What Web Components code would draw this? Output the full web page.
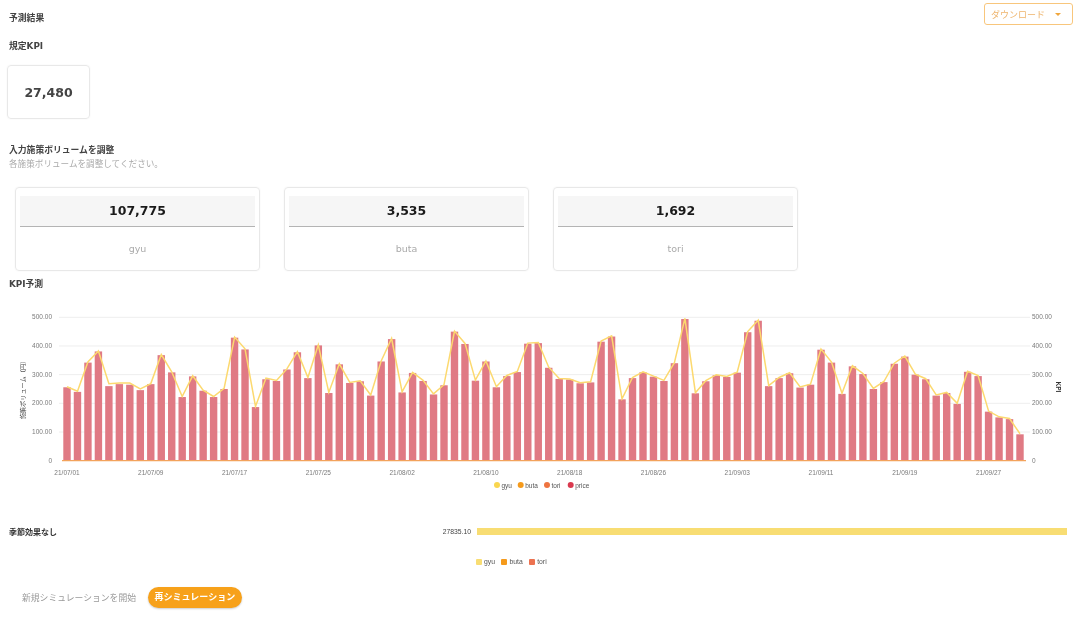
<!DOCTYPE html>
<html lang="ja">
<head>
<meta charset="utf-8">
<title>予測結果</title>
<style>
  html, body { margin: 0; background: #fff; }
  body {
    font-family: "DejaVu Sans", "Noto Sans CJK JP", sans-serif;
    color: #333;
    width: 1080px;
    height: 623px;
    overflow: hidden;
  }
</style>
</head>
<body>
<result-page>
  <section-title slot="title">予測結果</section-title>
  <download-button slot="action">ダウンロード</download-button>
</result-page>

<script>
// bar heights read off the reference, 21/07/01 .. 21/09/30
const VOLUMES = [
  256,240,342,381,260,267,265,246,267,368,308,222,294,244,222,250,429,388,187,284,
  278,318,378,288,402,236,336,271,277,227,346,424,238,306,278,231,263,450,407,279,
  346,256,295,309,408,410,324,285,283,270,273,415,433,214,288,308,293,278,340,494,
  235,277,298,292,307,448,488,260,288,305,255,265,387,342,233,329,302,250,274,338,
  363,300,284,227,236,198,310,295,171,151,145,92
];
// the line only departs from the bar tops in a few places
const LINE_OFFSET = { 4: 8, 5: 4, 6: 6, 7: 4, 18: 2, 19: 4 };

class SectionTitle extends HTMLElement {
  connectedCallback() {
    this.attachShadow({ mode: "open" }).innerHTML = `
      <style>
        :host { display: block; font-size: 8.8px; font-weight: 700; line-height: 13px; color: #444; }
      </style>
      <slot></slot>`;
  }
}

class DownloadButton extends HTMLElement {
  connectedCallback() {
    this.attachShadow({ mode: "open" }).innerHTML = `
      <style>
        :host {
          display: flex;
          align-items: center;
          justify-content: space-between;
          box-sizing: border-box;
          width: 89px;
          height: 22px;
          padding: 0 11px 0 6px;
          border: 1.5px solid #f8c67c;
          border-radius: 3px;
          color: #eeb46c;
          font-size: 9px;
        }
        i { width: 0; height: 0; border: 3px solid transparent; border-top: 3.5px solid #f0a63c; border-bottom: 0; }
      </style>
      <slot></slot><i></i>`;
  }
}

class KpiCard extends HTMLElement {
  connectedCallback() {
    this.attachShadow({ mode: "open" }).innerHTML = `
      <style>
        :host {
          display: flex;
          align-items: center;
          justify-content: center;
          box-sizing: border-box;
          width: 83px;
          height: 54px;
          border: 1px solid #e8e8e8;
          border-radius: 4px;
          box-shadow: 0 0 2px rgba(0,0,0,.05);
          font-size: 12.5px;
          font-weight: 700;
          color: #444;
        }
      </style>
      <slot></slot>`;
  }
}

class VolumeCard extends HTMLElement {
  connectedCallback() {
    this.attachShadow({ mode: "open" }).innerHTML = `
      <style>
        :host {
          display: block;
          box-sizing: border-box;
          width: 245px;
          height: 84px;
          padding: 8px 4px 0;
          border: 1px solid #e8e8e8;
          border-radius: 4px;
          box-shadow: 0 0 2px rgba(0,0,0,.05);
        }
        .value {
          height: 30px;
          line-height: 30px;
          background: #f6f6f6;
          border-bottom: 1.5px solid #b4b4b4;
          text-align: center;
          font-size: 12.5px;
          font-weight: 700;
          color: #1a1a1a;
        }
        .name { margin-top: 15px; text-align: center; font-size: 9.5px; line-height: 14px; color: #aaa; }
      </style>
      <div class="value"><slot></slot></div>
      <div class="name">${this.getAttribute("name")}</div>`;
  }
}

class ComboChart extends HTMLElement {
  connectedCallback() {
    const root = this.attachShadow({ mode: "open" });
    const base = 160.7, perUnit = 143.4 / 500, x0 = 67, step = 953 / 91;
    const y = (v) => base - v * perUnit;
    let grid = "", yLabels = "", bars = "", xLabels = "";

    for (let v = 0; v <= 500; v += 100) {
      const text = v ? v.toFixed(2) : "0";
      if (v) grid += `<line x1="59" x2="1030" y1="${y(v)}" y2="${y(v)}" stroke="#eee"/>`;
      yLabels += `<text x="52" y="${y(v) + 2}" text-anchor="end">${text}</text>`;
      yLabels += `<text x="1032" y="${y(v) + 2}">${text}</text>`;
    }
    VOLUMES.forEach((v, i) => {
      bars += `<rect x="${x0 + i * step - 3.7}" y="${y(v)}" width="7.4" height="${v * perUnit}"/>`;
    });
    const dates = ["21/07/01","21/07/09","21/07/17","21/07/25","21/08/02","21/08/10","21/08/18","21/08/26","21/09/03","21/09/11","21/09/19","21/09/27"];
    dates.forEach((d, i) => {
      xLabels += `<text x="${x0 + i * 8 * step}" y="174.5" text-anchor="middle">${d}</text>`;
    });
    const line = VOLUMES.map((v, i) => `${(x0 + i * step).toFixed(1)},${y(v + (LINE_OFFSET[i] || 2)).toFixed(1)}`).join(" ");
    const legend = [["gyu", 497, "#f9d64f"], ["buta", 520.7, "#f59a1b"], ["tori", 547, "#ee7440"], ["price", 570.7, "#d9394e"]]
      .map(([n, x, c]) => `<circle cx="${x}" cy="185" r="3" fill="${c}"/><text x="${x + 4.5}" y="187.5">${n}</text>`).join("");

    root.innerHTML = `
      <style>
        :host { display: block; height: 200px; }
        svg { display: block; }
        text { font-family: "Liberation Sans", "Noto Sans CJK JP", sans-serif; font-size: 6.5px; fill: #7a7a7a; }
        .legend text { fill: #555; }
        .title { fill: #444; font-size: 6.2px; }
        .kpi { fill: #333; font-weight: 700; }
      </style>
      <svg width="1080" height="200" viewBox="0 0 1080 200">
        ${grid}
        <g fill="#e07a84">${bars}</g>
        <line x1="62" x2="1026" y1="${base}" y2="${base}" stroke="#f3a35c" stroke-width="1.2"/>
        <polyline points="${line}" fill="none" stroke="#fcd96f" stroke-width="1.5"/>
        ${yLabels}
        ${xLabels}
        <text class="title" transform="translate(25 88.5) rotate(-90)" text-anchor="middle">施策ボリューム（円）</text>
        <text class="kpi" transform="translate(1056 87) rotate(90)" text-anchor="middle">KPI</text>
        <g class="legend">${legend}</g>
      </svg>`;
  }
}

class SeasonBar extends HTMLElement {
  connectedCallback() {
    this.attachShadow({ mode: "open" }).innerHTML = `
      <style>
        :host { display: block; font-family: "Liberation Sans", "Noto Sans CJK JP", sans-serif; }
        .row { display: flex; align-items: center; height: 14px; }
        .label { width: 400px; font-family: "DejaVu Sans", "Noto Sans CJK JP", sans-serif; font-size: 8px; font-weight: 700; color: #333; }
        .total { width: 62px; margin-right: 1px; text-align: right; font-size: 6.8px; color: #444; }
        .bar { width: 590px; height: 7px; margin-left: 5px; background: #f8dd73; }
        .legend { display: flex; gap: 6px; margin: 20px 0 0 466.5px; font-size: 6.8px; color: #555; line-height: 8px; }
        .legend span { display: flex; align-items: center; gap: 2px; }
        .legend i { width: 6.5px; height: 6.5px; border-radius: 1px; }
      </style>
      <div class="row">
        <div class="label"><slot></slot></div>
        <div class="total">27835.10</div>
        <div class="bar"></div>
      </div>
      <div class="legend">
        <span><i style="background:#f8dd73"></i>gyu</span>
        <span><i style="background:#f59a1b"></i>buta</span>
        <span><i style="background:#ec7250"></i>tori</span>
      </div>`;
  }
}

class ResultPage extends HTMLElement {
  connectedCallback() {
    const root = this.attachShadow({ mode: "open" });
    root.innerHTML = `
      <style>
        /* the reference is a soft upscale, a touch of blur brings the edges closer */
        :host { display: block; padding: 3px 7px 0 9px; filter: blur(.4px); }
        .head { display: flex; justify-content: space-between; height: 22px; }
        .head ::slotted([slot="title"]) { margin-top: 9px; }
        .kpi-title { margin-top: 15px; }
        kpi-card { margin: 12px 0 0 -2px; }
        .adjust { margin-top: 25px; }
        .hint { font-size: 8.6px; line-height: 13px; margin-top: 1px; color: #aaa; }
        .cards { display: flex; gap: 24px; margin: 16px 0 0 6px; }
        .forecast { margin-top: 7px; }
        combo-chart { margin: 9px 0 0 -9px; }
        season-bar { margin-top: 24px; }
        .actions { display: flex; align-items: center; gap: 12px; margin: 21px 0 0 13px; }
        .plain { font-size: 8.8px; color: #999; }
        .primary {
          height: 21px;
          line-height: 21px;
          padding: 0 6.5px;
          border-radius: 11px;
          background: #f7a11a;
          box-shadow: 0 1px 2px rgba(0,0,0,.2);
          color: #fff;
          font-size: 9px;
          font-weight: 700;
        }
      </style>
      <div class="head"><slot name="title"></slot><slot name="action"></slot></div>
      <section-title class="kpi-title">規定KPI</section-title>
      <kpi-card>27,480</kpi-card>
      <section-title class="adjust">入力施策ボリュームを調整</section-title>
      <div class="hint">各施策ボリュームを調整してください。</div>
      <div class="cards">
        <volume-card name="gyu">107,775</volume-card>
        <volume-card name="buta">3,535</volume-card>
        <volume-card name="tori">1,692</volume-card>
      </div>
      <section-title class="forecast">KPI予測</section-title>
      <combo-chart></combo-chart>
      <season-bar>季節効果なし</season-bar>
      <div class="actions">
        <span class="plain">新規シミュレーションを開始</span>
        <span class="primary">再シミュレーション</span>
      </div>`;
  }
}

customElements.define("section-title", SectionTitle);
customElements.define("download-button", DownloadButton);
customElements.define("kpi-card", KpiCard);
customElements.define("volume-card", VolumeCard);
customElements.define("combo-chart", ComboChart);
customElements.define("season-bar", SeasonBar);
customElements.define("result-page", ResultPage);
</script>
</body>
</html>
